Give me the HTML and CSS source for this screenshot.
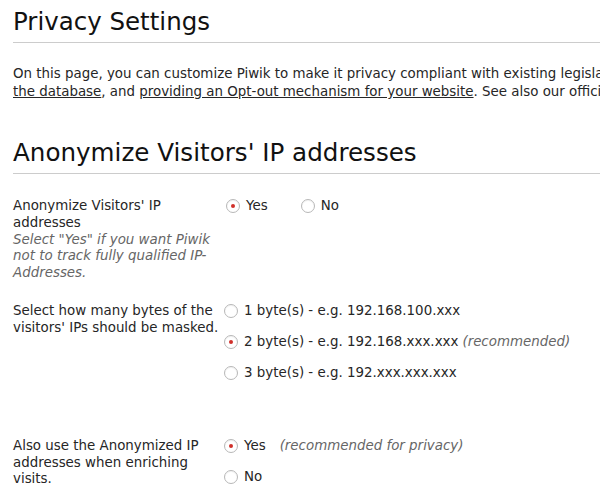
FILE: index.html
```html
<!DOCTYPE html>
<html>
<head>
<meta charset="utf-8">
<link rel="stylesheet" href="styles.css">
</head>
<body>
<div class="page">
  <h1 class="title">Privacy Settings</h1>
  <p class="intro">On this page, you can customize Piwik to make it privacy compliant with existing legislation, by anonymizing the visitor IP addresses, automatically deleting old visitor logs from<br><a href="#">the database</a>, and <a href="#">providing an Opt-out mechanism for your website</a>. See also our official privacy guide.</p>

  <h2 class="section">Anonymize Visitors' IP addresses</h2>

  <div class="row row-first">
    <div class="label">Anonymize Visitors' IP addresses<span class="help">Select "Yes" if you want Piwik not to track fully qualified IP-Addresses.</span></div>
    <div class="opts inline">
      <label class="opt"><span class="radio on"></span>Yes</label>
      <label class="opt"><span class="radio"></span>No</label>
    </div>
  </div>

  <div class="row row-bytes">
    <div class="label">Select how many bytes of the visitors' IPs should be masked.</div>
    <div class="opts stack">
      <label class="opt"><span class="radio"></span>1 byte(s) - e.g. 192.168.100.xxx</label>
      <label class="opt"><span class="radio on"></span>2 byte(s) - e.g. 192.168.xxx.xxx <em class="note">(recommended)</em></label>
      <label class="opt"><span class="radio"></span>3 byte(s) - e.g. 192.xxx.xxx.xxx</label>
    </div>
  </div>

  <div class="row row-enrich">
    <div class="label">Also use the Anonymized IP addresses when enriching visits.</div>
    <div class="opts stack">
      <label class="opt"><span class="radio on"></span>Yes <em class="note note-gap">(recommended for privacy)</em></label>
      <label class="opt"><span class="radio"></span>No</label>
    </div>
  </div>
</div>
</body>
</html>
```

FILE: styles.css
```css
html, body {
  margin: 0;
  padding: 0;
  overflow: hidden;
  background: #fff;
}
body {
  font-family: "DejaVu Sans", Verdana, sans-serif;
  color: #262626;
  font-size: 13.4px;
}
.page {
  width: 1100px;
  padding-left: 13px;
}
.title {
  font-weight: normal;
  font-size: 24.5px;
  line-height: 30px;
  margin: 7px 0 0 0;
  padding-bottom: 5px;
  border-bottom: 1px solid #ccc;
  width: 587px;
  color: #111;
}
.intro {
  margin: 22px 0 0 0;
  line-height: 18px;
  white-space: nowrap;
}
.intro a {
  color: #262626;
  text-decoration: underline;
}
.section {
  font-weight: normal;
  font-size: 24.6px;
  line-height: 30px;
  margin: 37px 0 0 0;
  padding-bottom: 5px;
  border-bottom: 1px solid #ccc;
  width: 587px;
  color: #111;
}
.row {
  display: flex;
  align-items: flex-start;
  line-height: 16.8px;
}
.row-first { margin-top: 24px; }
.row-bytes { margin-top: 21px; }
.row-enrich { margin-top: 56px; }
.label {
  width: 211px;
  flex: none;
}
.help {
  display: block;
  font-style: italic;
  color: #666;
}
.opts.inline {
  display: flex;
  align-items: flex-start;
  gap: 33px;
  padding-left: 2px;
}
.opts.stack {
  display: flex;
  flex-direction: column;
  align-items: flex-start;
  gap: 14.2px;
}
.opt {
  display: flex;
  align-items: center;
  white-space: nowrap;
}
.radio {
  width: 14px;
  height: 14px;
  border: 1px solid #b8b8b8;
  border-radius: 50%;
  box-sizing: border-box;
  margin-right: 6px;
  display: inline-flex;
  align-items: center;
  justify-content: center;
  background: #fff;
  box-shadow: inset 0 1px 1px rgba(0,0,0,0.06);
}
.radio.on::after {
  content: "";
  width: 4px;
  height: 4px;
  border-radius: 50%;
  background: #d0302a;
}
.note {
  color: #666;
  margin-left: 4px;
}
.note-gap { margin-left: 14px; }
```
